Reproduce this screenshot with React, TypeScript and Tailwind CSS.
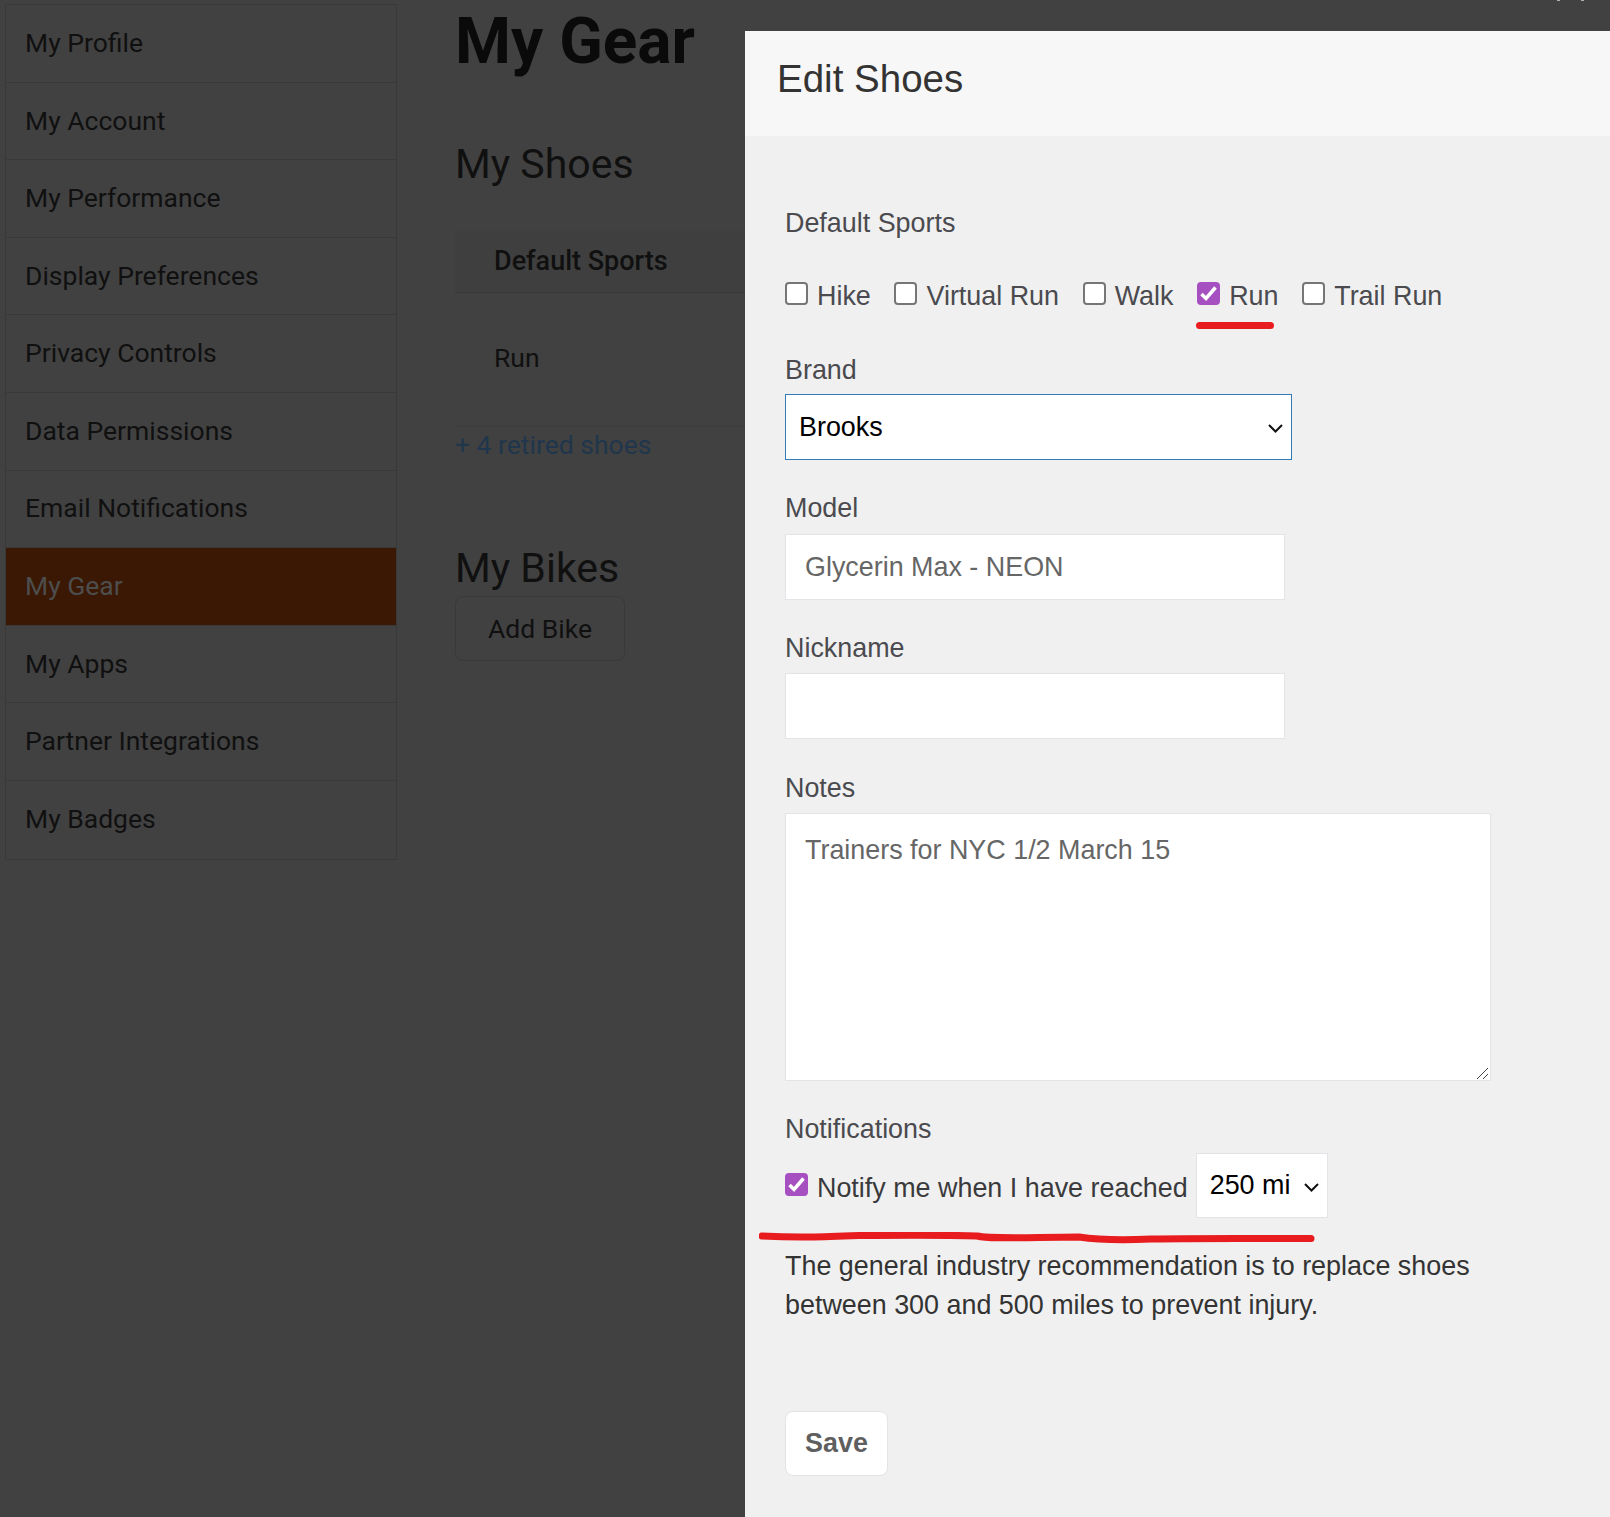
const navItems = [
  "My Profile",
  "My Account",
  "My Performance",
  "Display Preferences",
  "Privacy Controls",
  "Data Permissions",
  "Email Notifications",
  "My Gear",
  "My Apps",
  "Partner Integrations",
  "My Badges",
];

const sports = [
  { name: "Hike", checked: false },
  { name: "Virtual Run", checked: false },
  { name: "Walk", checked: false },
  { name: "Run", checked: true },
  { name: "Trail Run", checked: false },
];

function Sidebar() {
  return (
    <nav className="w-[392px] shrink-0 border border-[#393939]">
      {navItems.map((item) => (
        <div
          key={item}
          className={`flex h-[77.6px] items-center border-b border-[#393939] px-[19px] pb-[1px] text-[26.5px] last:border-b-0 ${
            item === "My Gear" ? "bg-[#3a1804] text-[#4d4d4d]" : "text-[#101010]"
          }`}
        >
          {item}
        </div>
      ))}
    </nav>
  );
}

function Field({ label, className, children }: { label: string; className: string; children: React.ReactNode }) {
  return (
    <div className={className}>
      <label className="block text-[26.9px] leading-[31px] text-[#4a4a4f]">{label}</label>
      {children}
    </div>
  );
}

function Checkbox({ checked }: { checked: boolean }) {
  return (
    <span className="relative mr-[9px] mt-[-7px] flex h-[23px] w-[23px] shrink-0">
      <input
        type="checkbox"
        defaultChecked={checked}
        className="h-[23px] w-[23px] appearance-none rounded-[4px] border-2 border-[#767676] bg-white checked:border-[#a64fc0] checked:bg-[#a64fc0]"
      />
      {checked && (
        <svg className="absolute left-0 top-0" width="23" height="23" viewBox="0 0 23 23" fill="none">
          <path d="M4.5 12 L9 16.5 L18.5 5.5" stroke="white" strokeWidth="3.5" />
        </svg>
      )}
    </span>
  );
}

function Chevron() {
  return (
    <svg className="pointer-events-none absolute right-[9px] top-1/2 mt-[-3px]" width="15" height="9" viewBox="0 0 15 9" fill="none">
      <path d="M1 1 L7.5 7.5 L14 1" stroke="#111111" strokeWidth="2" />
    </svg>
  );
}

export default function App() {
  return (
    <div className="relative h-[1517px] w-[1610px] overflow-hidden bg-[#414141] font-['Roboto',sans-serif]">
      <div className="flex pl-[5px] pt-[4px]">
        <Sidebar />
        <main className="w-[700px] pl-[58px]">
          <h1 className="text-[64px] font-bold leading-[75px] text-[#0a0a0a]">My Gear</h1>
          <h2 className="mt-[60px] text-[41px] leading-[50px] text-[#101010]">My Shoes</h2>
          <div className="mt-[42px] flex h-[62px] items-center border-b border-[#393939] bg-[#3f3f3f] pl-[39px] text-[27px] font-medium text-[#101010]">
            Default Sports
          </div>
          <div className="flex h-[134px] items-center border-b border-[#3c3c3c] pb-[3px] pl-[39px] text-[26.5px] text-[#101010]">
            Run
          </div>
          <div className="text-[26.5px] leading-[36px] text-[#20364c]">+ 4 retired shoes</div>
          <h2 className="mt-[80px] text-[41px] leading-[50px] text-[#101010]">My Bikes</h2>
          <button className="mt-[3px] h-[65px] w-[170px] rounded-lg border border-[#393939] text-[26.5px] text-[#101010]">
            Add Bike
          </button>
        </main>
      </div>

      {/* bits of the window's close control, cut off at the top edge */}
      <span className="absolute left-[1557px] top-0 h-px w-[3px] bg-[#b0b0b0]" />
      <span className="absolute left-[1581px] top-0 h-px w-[3px] bg-[#b0b0b0]" />

      {/* Edit panel */}
      <aside className="absolute bottom-0 left-[745px] right-0 top-[31px] bg-[#f0f0f0] font-['Liberation_Sans',sans-serif]">
        <header className="flex h-[105px] items-center bg-[#f7f7f7] pb-[10px] pl-[32px] text-[38.5px] text-[#333333]">Edit Shoes</header>
        <div className="pl-[40px]">
          <Field label="Default Sports" className="mt-[72px]">
            <div className="mt-[42px] flex h-[31px] items-center text-[26.9px] text-[#4a4a4f]">
              {sports.map((s) => (
                <label key={s.name} className="mr-[23.7px] flex items-center">
                  <Checkbox checked={s.checked} />
                  {s.name}
                </label>
              ))}
            </div>
          </Field>
          <div className="ml-[411px] mt-[10px] h-[7px] w-[78px] rounded-full bg-[#e81c1f]" />
          <Field label="Brand" className="mt-[26px]">
            <div className="relative mt-[8px] w-[507px]">
              <select className="block h-[66px] w-full appearance-none border border-[#337ab7] bg-white pl-[13px] text-[26.9px] text-black">
                <option>Brooks</option>
              </select>
              <Chevron />
            </div>
          </Field>
          <Field label="Model" className="mt-[33px]">
            <input
              defaultValue="Glycerin Max - NEON"
              className="mt-[10px] block h-[66px] w-[500px] border border-[#e3e3e8] bg-white pl-[19px] text-[26.9px] text-[#666666]"
            />
          </Field>
          <Field label="Nickname" className="mt-[33px]">
            <input className="mt-[9px] block h-[66px] w-[500px] border border-[#e3e3e8] bg-white pl-[19px] text-[26.9px]" />
          </Field>
          <Field label="Notes" className="mt-[34px]">
            <div className="relative mt-[9px] w-[706px]">
              <textarea
                defaultValue="Trainers for NYC 1/2 March 15"
                className="block h-[268px] w-full resize-none border border-[#e3e3e8] bg-white px-[19px] py-[18px] text-[26.9px] leading-[36px] text-[#666666]"
              />
              <svg className="pointer-events-none absolute bottom-[2px] right-[3px]" width="11" height="11" viewBox="0 0 11 11" fill="none">
                <path d="M0 11 L11 0 M6 11 L11 6" stroke="#444444" strokeWidth="1" />
              </svg>
            </div>
          </Field>
          <Field label="Notifications" className="mt-[33px]">
            <div className="mt-[8px] flex items-center text-[26.9px] text-[#3a3a3d]">
              <label className="mt-[5px] flex items-center">
                <Checkbox checked />
                Notify me when I have reached
              </label>
              <div className="relative ml-[8px] w-[132px]">
                <select className="block h-[65px] w-full appearance-none border border-[#e3e3e8] bg-white pl-[13px] text-[26.9px] text-black">
                  <option>250 mi</option>
                </select>
                <Chevron />
              </div>
            </div>
          </Field>
          <svg className="ml-[-26px] mt-[14px] block" width="556" height="12" viewBox="0 0 556 12" fill="none">
            <path
              d="M3 4 C40 6 60 5 100 3.5 C150 3 190 3 218 4 C230 7 260 5.5 320 5 C340 8 370 8 392 7 C430 6 500 6.5 552 6.5"
              stroke="#e81c1f"
              strokeWidth="7"
              strokeLinecap="round"
            />
          </svg>
          <p className="mt-[3px] w-[720px] text-[26.9px] leading-[39px] text-[#333333]">
            The general industry recommendation is to replace shoes between 300 and 500 miles to prevent injury.
          </p>
          <button className="mt-[86px] h-[65px] w-[103px] rounded-lg border border-[#e3e3e8] bg-white text-[26.9px] font-bold text-[#5f5f5f]">
            Save
          </button>
        </div>
      </aside>
    </div>
  );
}
